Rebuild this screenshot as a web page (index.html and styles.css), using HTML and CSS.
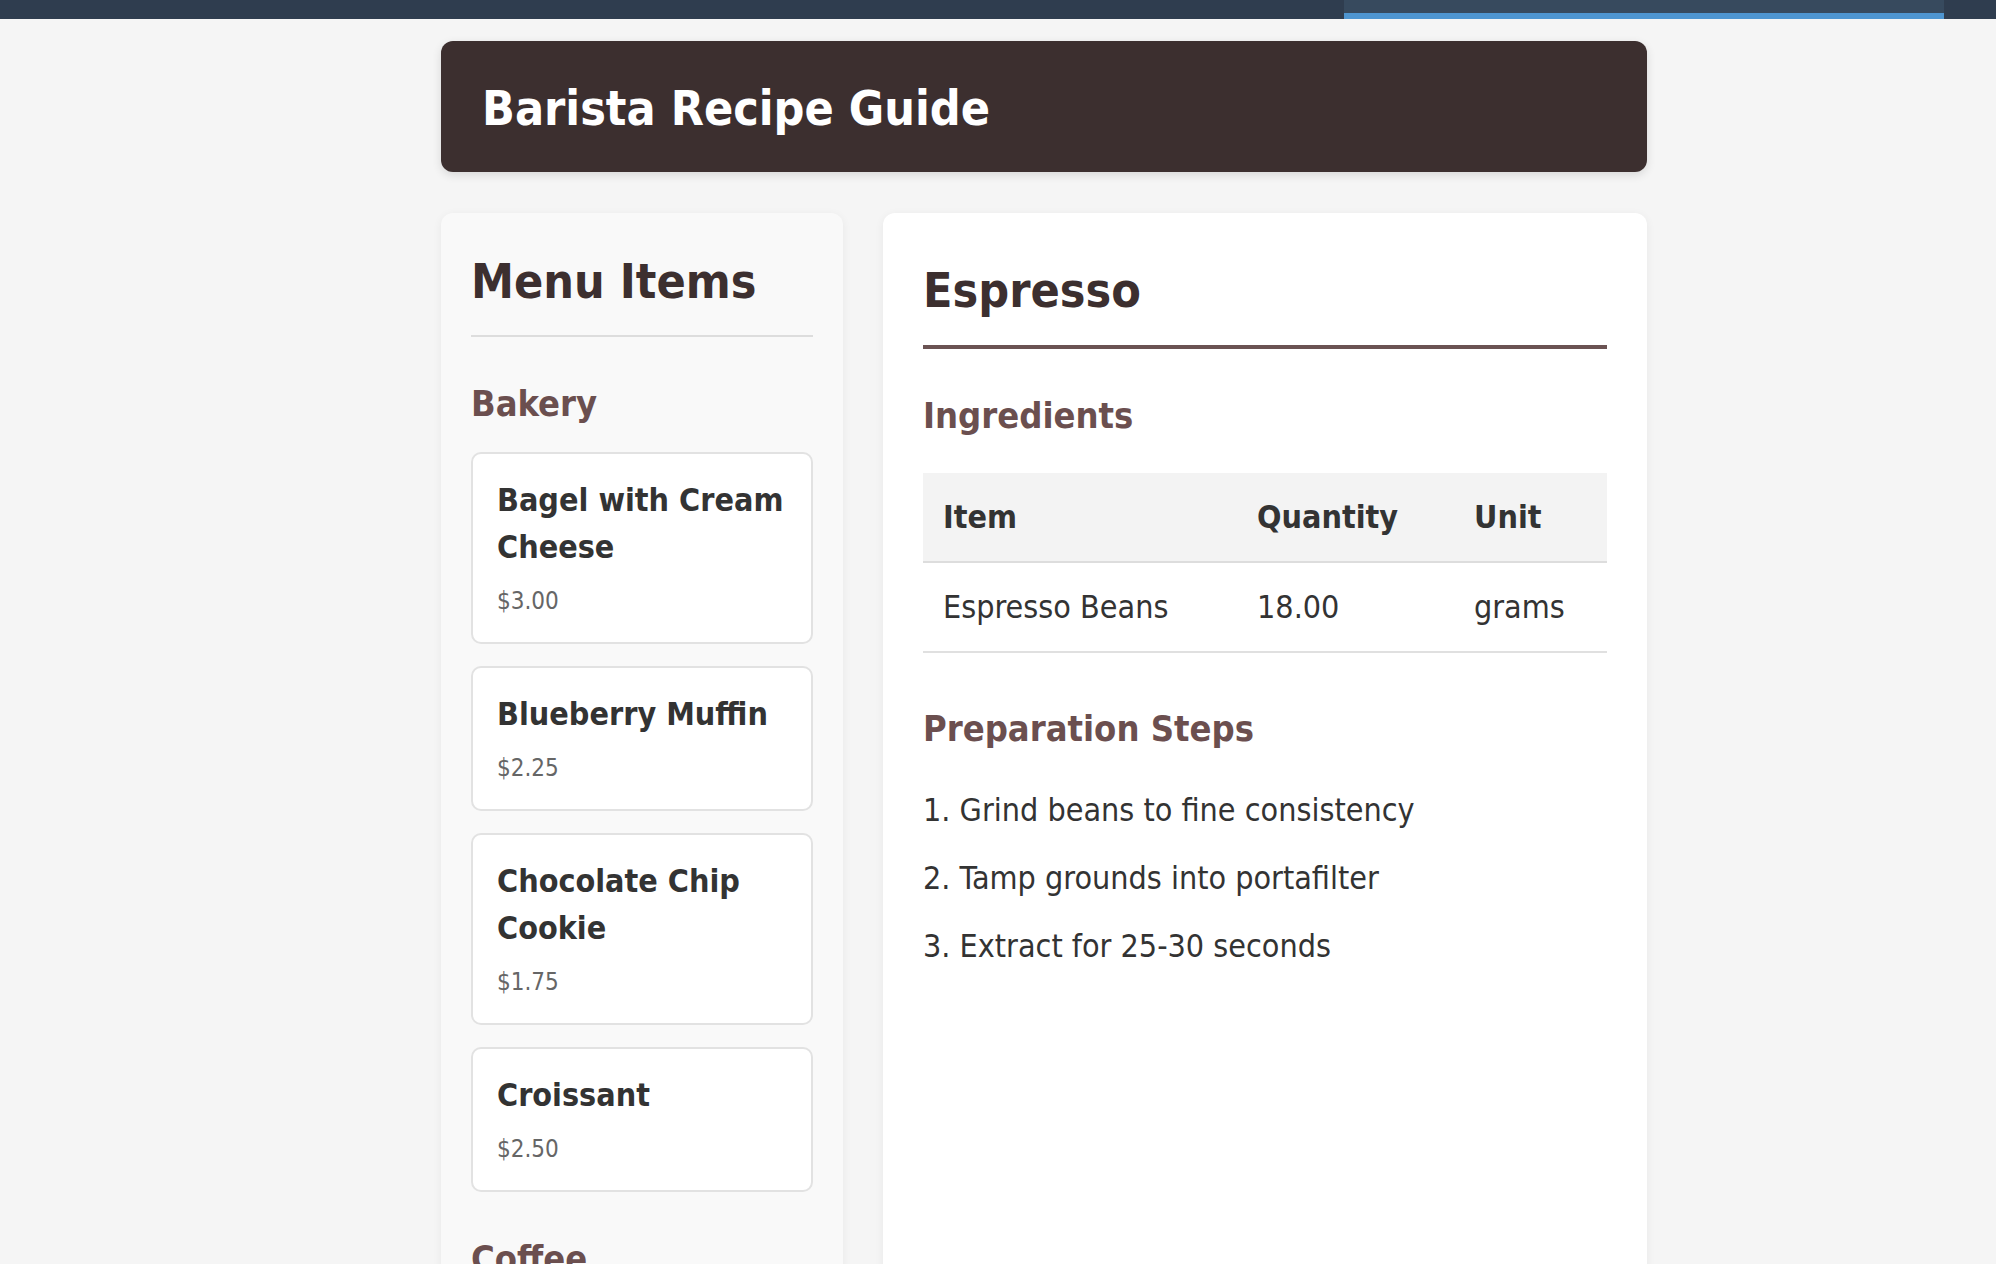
FILE: index.html
```html
<!DOCTYPE html>
<html lang="en">
<head>
<meta charset="utf-8">
<title>Barista Recipe Guide</title>
<link rel="stylesheet" href="styles.css">
</head>
<body>
<div class="topbar">
  <div class="topbar-tab"></div>
</div>
<div class="page">
  <header class="site-header">
    <h1 class="site-title">Barista Recipe Guide</h1>
  </header>
  <div class="layout">
    <aside class="menu-panel">
      <h2 class="panel-title">Menu Items</h2>
      <section class="category">
        <h3 class="category-title">Bakery</h3>
        <div class="item-card">
          <div class="item-name">Bagel with Cream Cheese</div>
          <div class="item-price">$3.00</div>
        </div>
        <div class="item-card">
          <div class="item-name">Blueberry Muffin</div>
          <div class="item-price">$2.25</div>
        </div>
        <div class="item-card">
          <div class="item-name">Chocolate Chip Cookie</div>
          <div class="item-price">$1.75</div>
        </div>
        <div class="item-card">
          <div class="item-name">Croissant</div>
          <div class="item-price">$2.50</div>
        </div>
      </section>
      <section class="category">
        <h3 class="category-title">Coffee</h3>
        <div class="item-card">
          <div class="item-name">Americano</div>
          <div class="item-price">$3.00</div>
        </div>
        <div class="item-card">
          <div class="item-name">Cappuccino</div>
          <div class="item-price">$4.00</div>
        </div>
        <div class="item-card">
          <div class="item-name">Espresso</div>
          <div class="item-price">$2.50</div>
        </div>
        <div class="item-card">
          <div class="item-name">Latte</div>
          <div class="item-price">$4.25</div>
        </div>
      </section>
    </aside>
    <main class="recipe-panel">
      <h2 class="recipe-title">Espresso</h2>
      <section class="ingredients">
        <h3 class="section-title">Ingredients</h3>
        <table class="ingredient-table">
          <colgroup>
            <col class="col-item">
            <col class="col-qty">
            <col class="col-unit">
          </colgroup>
          <thead>
            <tr><th>Item</th><th>Quantity</th><th>Unit</th></tr>
          </thead>
          <tbody>
            <tr><td>Espresso Beans</td><td>18.00</td><td>grams</td></tr>
          </tbody>
        </table>
      </section>
      <section class="steps">
        <h3 class="section-title">Preparation Steps</h3>
        <ol class="step-list">
          <li>Grind beans to fine consistency</li>
          <li>Tamp grounds into portafilter</li>
          <li>Extract for 25-30 seconds</li>
        </ol>
      </section>
    </main>
  </div>
</div>
</body>
</html>
```
FILE: styles.css
```css
* { box-sizing: border-box; }

html, body {
  margin: 0;
  padding: 0;
}

body {
  background: #f5f5f5;
  font-family: "DejaVu Sans Condensed", "DejaVu Sans", sans-serif;
  font-stretch: condensed;
  font-size: 32px;
  line-height: 1.5;
  color: #333;
}

.topbar {
  height: 19px;
  background: #2f3d4f;
  display: flex;
  justify-content: flex-end;
  padding-right: 52px;
}

.topbar-tab {
  width: 600px;
  height: 19px;
  background: #374a5e;
  border-bottom: 6px solid #4e95d0;
}

.page {
  width: 1206px;
  margin: 22px 349px 0 auto;
}

.site-header {
  background: #3c2f2f;
  border-radius: 12px;
  padding: 31px 41px 28px;
  box-shadow: 0 3px 10px rgba(0, 0, 0, 0.12);
}

.site-title {
  margin: 0;
  font-size: 48px;
  line-height: 72px;
  font-weight: bold;
  color: #fff;
}

.layout {
  display: grid;
  grid-template-columns: 402px 764px;
  column-gap: 40px;
  margin-top: 41px;
  align-items: stretch;
}

.menu-panel {
  background: #f9f9f9;
  border-radius: 12px;
  padding: 30px;
  box-shadow: 0 2px 10px rgba(0, 0, 0, 0.06);
}

.panel-title {
  margin: 0;
  font-size: 48px;
  line-height: 72px;
  font-weight: bold;
  color: #3c2f2f;
  padding: 2px 0 18px;
  border-bottom: 2px solid #dddddd;
}

.category {
  margin-top: 40px;
}

.category-title {
  margin: 0 0 21px;
  font-size: 36px;
  line-height: 54px;
  font-weight: bold;
  color: #6b4f4f;
}

.item-card {
  background: #fff;
  border: 2px solid #e2e2e2;
  border-radius: 10px;
  padding: 23px 24px;
  margin-bottom: 22px;
}

.item-name {
  font-size: 32px;
  line-height: 47px;
  font-weight: bold;
  color: #333;
  margin-bottom: 12px;
}

.item-price {
  font-size: 24px;
  line-height: 36px;
  color: #666;
}

.recipe-panel {
  background: #fff;
  border-radius: 12px;
  padding: 40px;
  box-shadow: 0 2px 10px rgba(0, 0, 0, 0.06);
}

.recipe-title {
  margin: 0;
  font-size: 48px;
  line-height: 72px;
  font-weight: bold;
  color: #3c2f2f;
  padding: 1px 0 19px;
  border-bottom: 4px solid #6b5353;
}

.section-title {
  margin: 0 0 30px;
  font-size: 36px;
  line-height: 54px;
  font-weight: bold;
  color: #6b4f4f;
}

.ingredients {
  margin-top: 40px;
}

.ingredient-table {
  width: 100%;
  border-collapse: collapse;
  table-layout: fixed;
}

.col-item { width: 314px; }
.col-qty { width: 217px; }
.col-unit { width: 153px; }

.ingredient-table th,
.ingredient-table td {
  text-align: left;
  padding: 20px;
  font-size: 32px;
  line-height: 48px;
}

.ingredient-table th {
  background: #f3f3f3;
  font-weight: bold;
  color: #333;
  border-bottom: 2px solid #dddddd;
}

.ingredient-table td {
  color: #333;
  border-bottom: 2px solid #e0e0e0;
}

.steps {
  margin-top: 49px;
}

.step-list {
  margin: 0;
  padding: 0;
  list-style-position: inside;
}

.step-list li {
  font-size: 32px;
  line-height: 48px;
  color: #333;
  margin-bottom: 20px;
}
```
